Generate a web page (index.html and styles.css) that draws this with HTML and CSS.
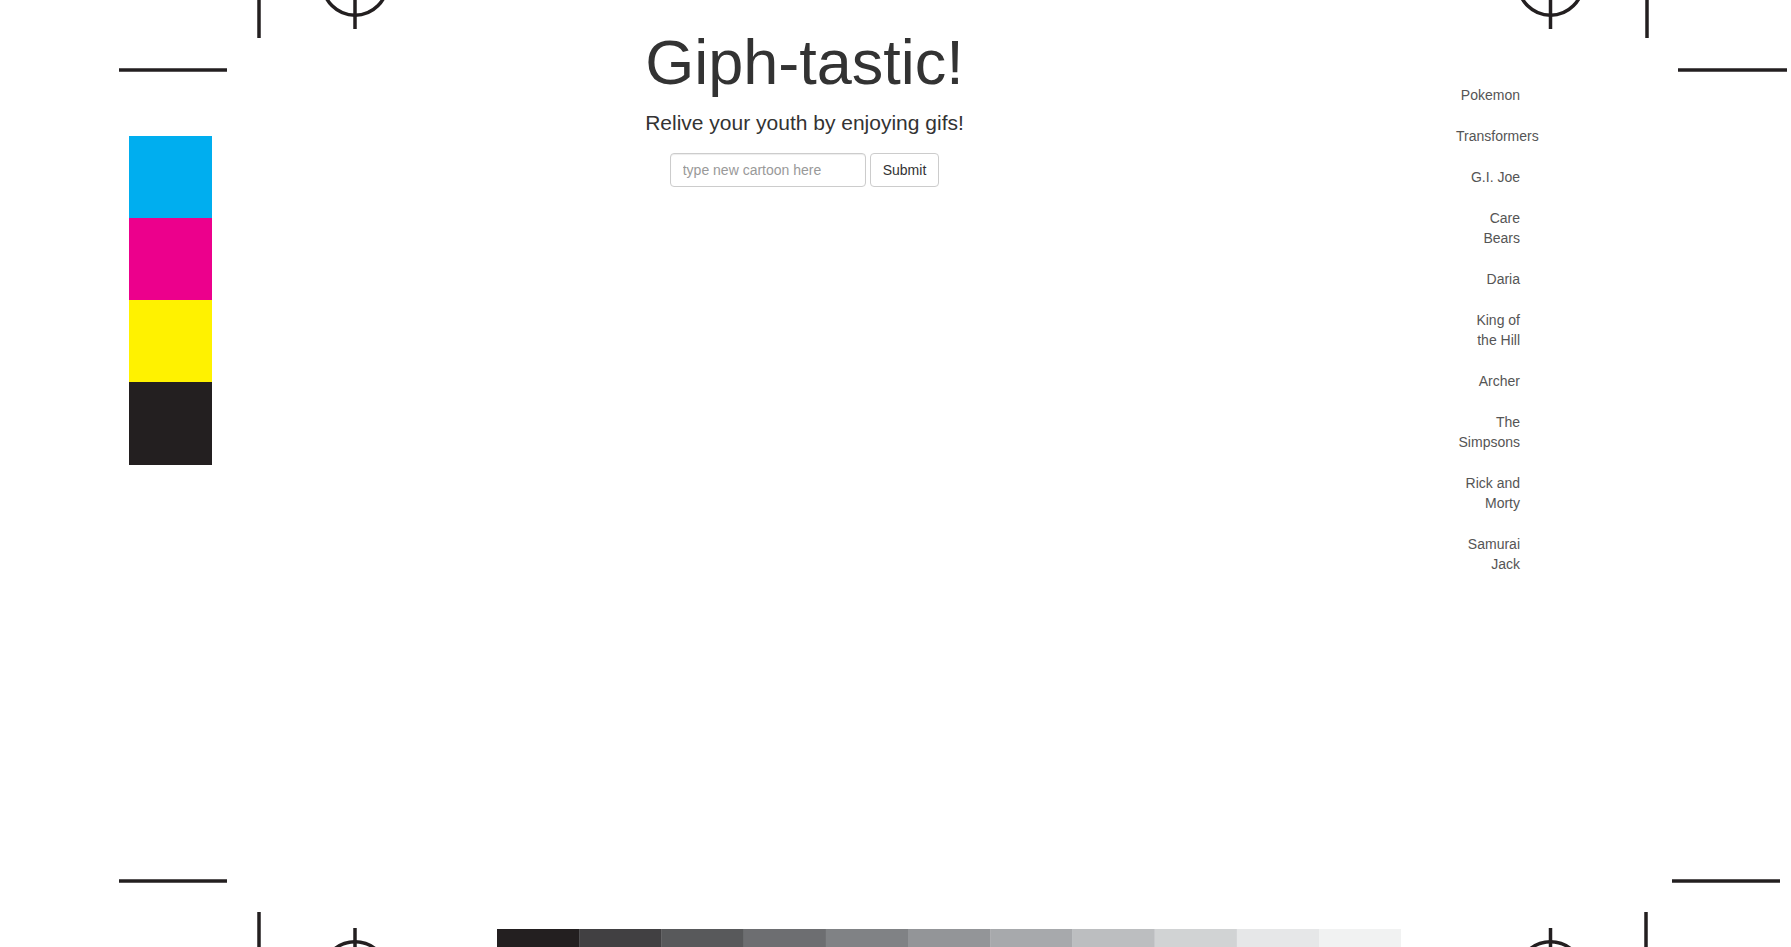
FILE: index.html
```html
<!DOCTYPE html>
<html lang="en">
<head>
<meta charset="utf-8">
<title>Giph-tastic!</title>
<link rel="stylesheet" href="styles.css">
</head>
<body>
<div class="sheet">
  <svg class="marks" width="1791" height="947" viewBox="0 0 1791 947" aria-hidden="true">
    <g stroke="#231f20" fill="none">
      <!-- top left -->
      <line x1="119" y1="70" x2="227" y2="70" stroke-width="3.5"/>
      <line x1="259" y1="0" x2="259" y2="38" stroke-width="3.5"/>
      <circle cx="355" cy="-17" r="32.3" stroke-width="3.5"/>
      <line x1="355" y1="-60" x2="355" y2="29" stroke-width="3.5"/>
      <!-- top right -->
      <line x1="1678" y1="70" x2="1787" y2="70" stroke-width="3.5"/>
      <line x1="1647" y1="0" x2="1647" y2="38" stroke-width="3.5"/>
      <circle cx="1550.5" cy="-17" r="32.3" stroke-width="3.5"/>
      <line x1="1550.5" y1="-60" x2="1550.5" y2="29" stroke-width="3.5"/>
      <!-- bottom left -->
      <line x1="119" y1="881" x2="227" y2="881" stroke-width="3.5"/>
      <line x1="259" y1="912" x2="259" y2="960" stroke-width="3.5"/>
      <circle cx="355" cy="974" r="32.3" stroke-width="3.5"/>
      <line x1="355" y1="928" x2="355" y2="1010" stroke-width="3.5"/>
      <!-- bottom right -->
      <line x1="1672" y1="881" x2="1780" y2="881" stroke-width="3.5"/>
      <line x1="1646" y1="912" x2="1646" y2="960" stroke-width="3.5"/>
      <circle cx="1550.5" cy="974" r="32.3" stroke-width="3.5"/>
      <line x1="1550.5" y1="928" x2="1550.5" y2="1010" stroke-width="3.5"/>
    </g>
    <!-- CMYK patches -->
    <rect x="129" y="136" width="83" height="82" fill="#00aeef"/>
    <rect x="129" y="218" width="83" height="82" fill="#ec008c"/>
    <rect x="129" y="300" width="83" height="82" fill="#fff200"/>
    <rect x="129" y="382" width="83" height="83" fill="#231f20"/>
    <!-- greyscale ramp -->
    <rect x="497" y="929" width="82.5" height="30" fill="#231f20"/>
    <rect x="579.2" y="929" width="82.5" height="30" fill="#414042"/>
    <rect x="661.4" y="929" width="82.5" height="30" fill="#58595b"/>
    <rect x="743.6" y="929" width="82.5" height="30" fill="#6d6e71"/>
    <rect x="825.8" y="929" width="82.5" height="30" fill="#808285"/>
    <rect x="908" y="929" width="82.5" height="30" fill="#939598"/>
    <rect x="990.2" y="929" width="82.5" height="30" fill="#a7a9ac"/>
    <rect x="1072.4" y="929" width="82.5" height="30" fill="#bcbec0"/>
    <rect x="1154.6" y="929" width="82.5" height="30" fill="#d1d3d4"/>
    <rect x="1236.8" y="929" width="82.5" height="30" fill="#e6e7e8"/>
    <rect x="1319" y="929" width="82" height="30" fill="#f1f2f2"/>
  </svg>

  <div class="layout">
    <main class="main">
      <h1 class="title">Giph-tastic!</h1>
      <p class="lead">Relive your youth by enjoying gifs!</p>
      <form class="search" onsubmit="return false;">
        <input class="search-input" type="text" placeholder="type new cartoon here">
        <button class="btn" type="submit">Submit</button>
      </form>
      <div class="gifs"></div>
    </main>

    <nav class="shows">
      <button class="show-btn" type="button">Pokemon</button>
      <button class="show-btn" type="button">Transformers</button>
      <button class="show-btn" type="button">G.I. Joe</button>
      <button class="show-btn" type="button">Care Bears</button>
      <button class="show-btn" type="button">Daria</button>
      <button class="show-btn" type="button">King of the Hill</button>
      <button class="show-btn" type="button">Archer</button>
      <button class="show-btn" type="button">The Simpsons</button>
      <button class="show-btn" type="button">Rick and Morty</button>
      <button class="show-btn" type="button">Samurai Jack</button>
    </nav>
  </div>
</div>
</body>
</html>
```

FILE: styles.css
```css
html, body {
  margin: 0;
  padding: 0;
  background: #ffffff;
  overflow: hidden;
}

body {
  font-family: "Liberation Sans", Arial, Helvetica, sans-serif;
  font-size: 14px;
  line-height: 1.42857;
  color: #333333;
}

.sheet {
  position: relative;
  width: 1791px;
  height: 947px;
}

.marks {
  position: absolute;
  top: 0;
  left: 0;
  z-index: 0;
  pointer-events: none;
}

.layout {
  position: relative;
  z-index: 1;
  display: flex;
  align-items: flex-start;
}

.main {
  margin-left: 167px;
  width: 1275px;
  padding-top: 28px;
  text-align: center;
}

.title {
  margin: 0;
  font-size: 63px;
  font-weight: 400;
  line-height: 1.1;
  color: #333333;
}

.lead {
  margin: 11px 0 0;
  font-size: 21px;
  font-weight: 300;
  line-height: 1.4;
  color: #333333;
}

.search {
  margin-top: 15px;
  display: flex;
  justify-content: center;
  gap: 4px;
}

.search-input {
  box-sizing: border-box;
  width: 196px;
  height: 34px;
  padding: 6px 12px;
  font-family: inherit;
  font-size: 14px;
  line-height: 20px;
  color: #555555;
  background: #ffffff;
  border: 1px solid #cccccc;
  border-radius: 4px;
  box-shadow: inset 0 1px 1px rgba(0, 0, 0, 0.075);
}

.search-input::placeholder {
  color: #999999;
}

.btn {
  box-sizing: border-box;
  height: 34px;
  padding: 6px 12px;
  font-family: inherit;
  font-size: 14px;
  line-height: 20px;
  color: #333333;
  background: #ffffff;
  border: 1px solid #cccccc;
  border-radius: 4px;
}

.shows {
  margin-left: 1px;
  padding-top: 78px;
  display: flex;
  flex-direction: column;
  gap: 7px;
}

.show-btn {
  box-sizing: border-box;
  display: block;
  width: 90px;
  padding: 6px 12px;
  font-family: inherit;
  font-size: 14px;
  line-height: 20px;
  color: #555555;
  text-align: right;
  background: transparent;
  border: 1px solid transparent;
  border-radius: 4px;
}
```
